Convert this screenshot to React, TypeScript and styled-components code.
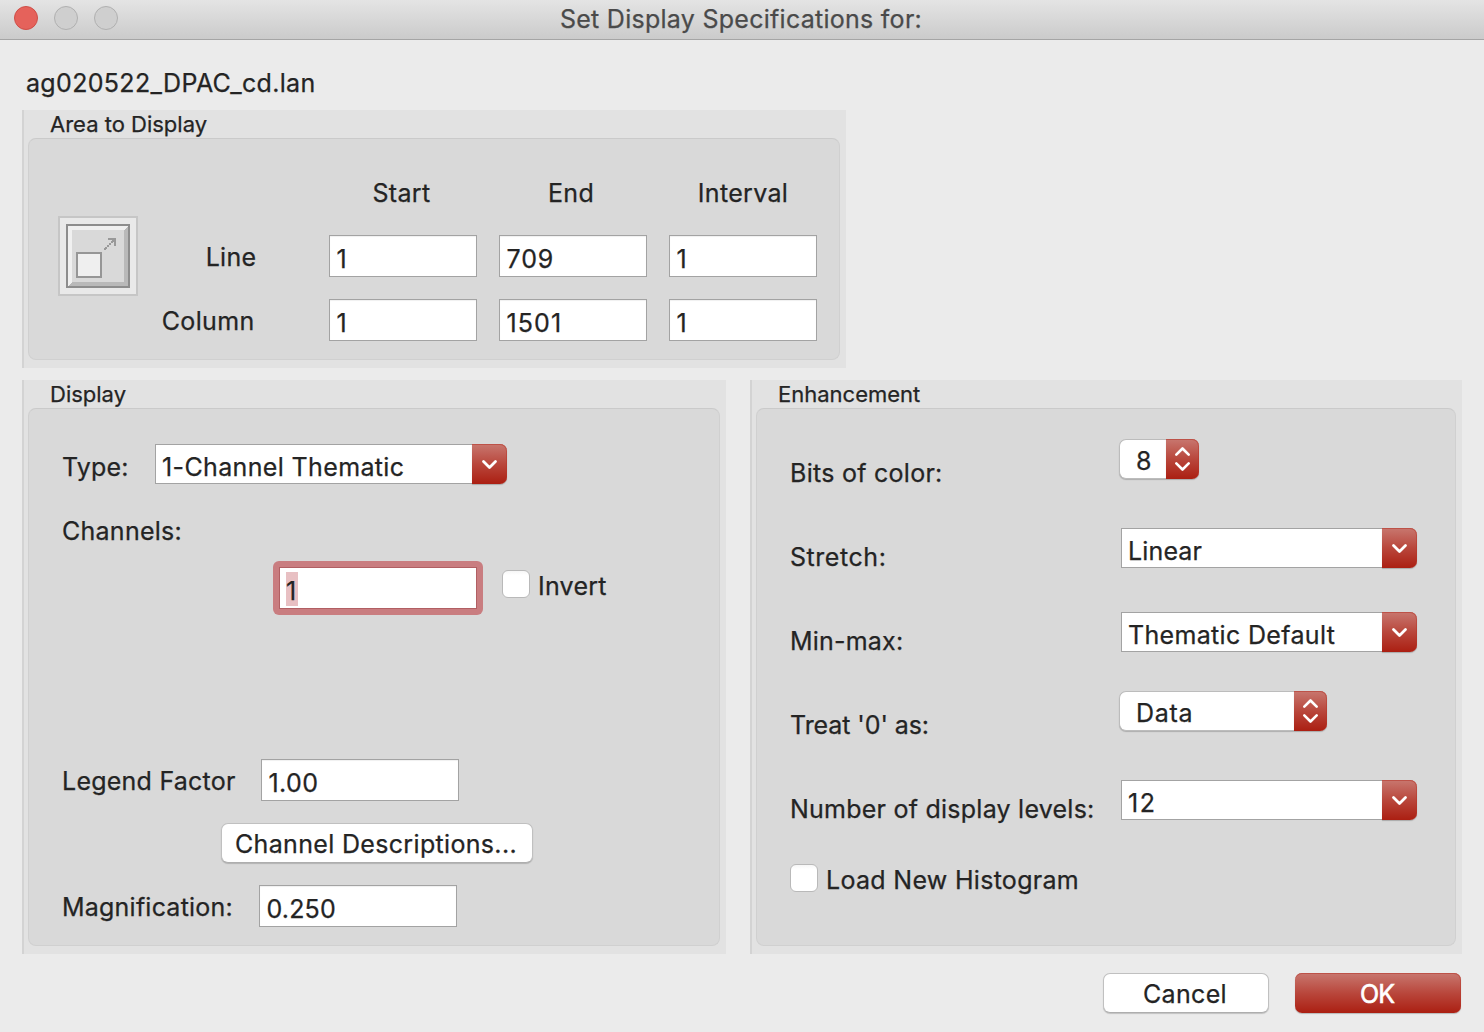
import React from 'react';
import styled, { createGlobalStyle, css } from 'styled-components';

const INK = '#242424';
const redFill = css`
  background: linear-gradient(#c8776f, #b9473c 50%, #ab1f12);
  box-shadow: inset 0 1px 0 #bd5248, inset -1px 0 0 rgba(185, 50, 38, 0.45), 0 1px 1px rgba(0, 0, 0, 0.22);
`;

const GlobalStyle = createGlobalStyle`
  * { box-sizing: border-box; }
  body {
    margin: 0;
    background: #ebebeb;
    color: ${INK};
    font-family: Inter, 'Liberation Sans', sans-serif;
    font-size: 25px;
    line-height: 30px;
    letter-spacing: 0.33px;
    white-space: nowrap;
    -webkit-text-stroke-width: 0.25px;
  }
`;

const Window = styled.div`
  width: 1484px;
  height: 1032px;
  overflow: hidden;
  display: flex;
  flex-direction: column;
  background: #ebebeb;
`;

const TitleBar = styled.header`
  height: 40px;
  flex: none;
  display: grid;
  grid-template-columns: 200px 1fr 200px;
  background: linear-gradient(#e4e4e4, #cbcbcb);
  border-bottom: 1px solid #a5a5a5;
`;

const Lights = styled.div`
  display: flex;
  gap: 16px;
  padding: 6px 0 0 14px;
`;

const Light = styled.span<{ $close?: boolean }>`
  width: 24px;
  height: 24px;
  border-radius: 50%;
  border: 1px solid ${p => (p.$close ? '#cf4e47' : '#b0b0b0')};
  background: ${p => (p.$close ? '#e5625b' : '#cfcfcf')};
`;

const Title = styled.h1`
  margin: 0;
  padding: 4px 2px 0 0;
  font: inherit;
  letter-spacing: 0.27px;
  text-align: center;
  color: #4a4a4a;
`;

const Content = styled.main`
  flex: 1;
  display: flex;
  flex-direction: column;
  padding: 28px 22px 0;
`;

const FileName = styled.div`
  height: 42px;
  padding-left: 4px;
  letter-spacing: 0.33px;
`;

const Group = styled.section<{ $w: number; $h: number }>`
  flex: none;
  width: ${p => p.$w}px;
  height: ${p => p.$h}px;
  display: flex;
  flex-direction: column;
  padding: 0 6px 8px 4px;
  border-left: 2px solid #d3d3d3;
  background: #e2e2e2;
`;

const GroupTitle = styled.h2`
  margin: 0;
  height: 28px;
  padding: 0 0 0 22px;
  font-size: 22px;
  font-weight: 400;
  line-height: 28px;
  letter-spacing: 0;
`;

const Well = styled.div<{ $pad: string }>`
  flex: 1;
  display: flex;
  flex-direction: column;
  padding: ${p => p.$pad};
  border: 1px solid #d0d0d0;
  border-top-color: #cacaca;
  border-radius: 8px;
  background: #d9d9d9;
`;

const AreaWell = styled(Well)`
  flex-direction: row;
`;

const AreaGrid = styled.div`
  display: grid;
  grid-template-columns: 157px repeat(3, 148px);
  grid-template-rows: repeat(3, 42px);
  gap: 22px;
  margin-left: 12px;
`;

const Head = styled.div<{ $shift?: number }>`
  padding: 7px ${p => p.$shift ?? 0}px 0 0;
  text-align: center;
`;

const RowLabel = styled.div<{ $end: number }>`
  padding: 7px ${p => p.$end}px 0 0;
  text-align: right;
`;

const Label = styled.span<{ $w?: number; $track?: number }>`
  flex: none;
  width: ${p => (p.$w ? `${p.$w}px` : 'auto')};
  letter-spacing: ${p => p.$track ?? 0.26}px;
`;

const Field = styled.div<{ $w?: number; $track?: number }>`
  flex: none;
  width: ${p => p.$w ?? 148}px;
  height: 42px;
  padding: 8px 0 0 6.5px;
  border: 1px solid #a3a3a3;
  background: #fff;
  letter-spacing: ${p => p.$track ?? 0.33}px;
  box-shadow: inset 0 1px 1px #f0f0f0;
`;

const FocusShell = styled.div`
  flex: none;
  padding: 6px;
  border-radius: 6px;
  background: #c97d80;
`;

const FocusField = styled(Field)`
  padding: 4px 0 0 6px;
  border-color: #b15f63;
  box-shadow: none;
`;

const Selected = styled.span`
  display: inline-block;
  width: 12px;
  height: 34px;
  padding-top: 4px;
  background: #e8c0c3;
`;

const Line = styled.div<{ $top: number; $h?: number; $left?: number }>`
  flex: none;
  display: flex;
  align-items: flex-start;
  height: ${p => p.$h ?? 42}px;
  margin: ${p => p.$top}px 0 0 ${p => p.$left ?? 0}px;
`;

const Drop = styled.div<{ $down?: number }>`
  flex: none;
  display: flex;
  padding-top: ${p => p.$down ?? 0}px;
`;

const ZoomFrame = styled.div`
  flex: none;
  width: 80px;
  height: 80px;
  margin-top: 45px;
  padding: 6px;
  border: 2px solid #c6c6c6;
  background: #e9e9e9;
`;

const IconSvg = styled.svg`
  display: block;
`;

const ComboText = styled.div<{ $w: number; $track?: number }>`
  width: ${p => p.$w}px;
  height: 40px;
  padding: 7px 0 0 6px;
  border: 1px solid #a3a3a3;
  border-right: 0;
  background: #fff;
  letter-spacing: ${p => p.$track ?? 0.36}px;
`;

const ComboButton = styled.div`
  ${redFill}
  width: 35px;
  height: 40px;
  border-radius: 0 7px 7px 0;
`;

const PopupText = styled.div<{ $w: number; $track?: number }>`
  width: ${p => p.$w}px;
  height: 40px;
  padding: 6px 0 0 16px;
  border: 1px solid #bcbcbc;
  border-right: 0;
  border-radius: 7px 0 0 7px;
  background: #fff;
  box-shadow: 0 1px 1px rgba(0, 0, 0, 0.2);
  letter-spacing: ${p => p.$track ?? 0.33}px;
`;

const PopupButton = styled(ComboButton)`
  width: 33px;
`;

const Check = styled.span`
  flex: none;
  width: 28px;
  height: 28px;
  margin-right: 8px;
  border: 1px solid #b9b9b9;
  border-radius: 6px;
  background: linear-gradient(#f6f6f6, #fff 4px);
`;

const Button = styled.button<{ $w: number; $primary?: boolean }>`
  flex: none;
  width: ${p => p.$w}px;
  height: 40px;
  padding: 2px 2px 0 0;
  border: 1px solid #c0c0c0;
  border-bottom-color: #aeaeae;
  border-radius: 7px;
  background: #fff;
  color: ${INK};
  font: inherit;
  letter-spacing: 0.33px;
  box-shadow: 0 1px 1px rgba(0, 0, 0, 0.18);
  ${p => p.$primary && css`
    ${redFill}
    border: 0;
    color: #fff;
    letter-spacing: -1px;
    -webkit-text-stroke-width: 0.6px;
  `}
`;

const Columns = styled.div`
  display: flex;
  gap: 24px;
  margin-top: 12px;
`;

const Footer = styled.footer`
  display: flex;
  justify-content: flex-end;
  gap: 26px;
  padding: 19px 1px 0 0;
`;

const EnhRow = styled.div`
  flex: none;
  display: grid;
  grid-template-columns: 330px auto;
  justify-content: start;
  height: 84px;
`;

const EnhLabel = styled.div<{ $track?: number }>`
  padding: 19px 0 0;
  letter-spacing: ${p => p.$track ?? 0.27}px;
`;

const Combo = ({ text, w, track }: { text: string; w: number; track?: number }) => (
  <>
    <ComboText $w={w} $track={track}>{text}</ComboText>
    <ComboButton>
      <svg width="35" height="40" fill="none" stroke="#fff" strokeWidth="2.8" strokeLinecap="round" strokeLinejoin="round">
        <path d="M11.5 17.5 17.5 23.5 23.5 17.5" />
      </svg>
    </ComboButton>
  </>
);

const Popup = ({ text, w, track }: { text: string; w: number; track?: number }) => (
  <>
    <PopupText $w={w} $track={track}>{text}</PopupText>
    <PopupButton>
      <svg width="33" height="40" fill="none" stroke="#fff" strokeWidth="2.6" strokeLinecap="round" strokeLinejoin="round">
        <path d="M10.3 15.7 16.5 9.5 22.7 15.7M10.3 24.3 16.5 30.5 22.7 24.3" />
      </svg>
    </PopupButton>
  </>
);

const ZoomIcon = () => (
  <IconSvg width="64" height="64" shapeRendering="crispEdges">
    <rect width="64" height="64" fill="#8d8d8d" />
    <rect x="2" y="2" width="60" height="60" fill="#f0f0f0" />
    <path d="M62 2V62H2L6 58H58V6Z" fill="#b9b9b9" />
    <rect x="6" y="6" width="52" height="52" fill="#d9d9d9" />
    <rect x="11" y="29" width="24" height="24" fill="#efefef" stroke="#969696" strokeWidth="2" />
    <path d="M42 14h8v8h-2v-4h-1v1h-2v2h-2v2h-2v2h-1v1h-2v-2h1v-1h2v-2h2v-2h2v-2h1v-1h-4z" fill="#999" />
  </IconSvg>
);

export default function App() {
  return (
    <>
      <GlobalStyle />
      <Window>
        <TitleBar>
          <Lights><Light $close /><Light /><Light /></Lights>
          <Title>Set Display Specifications for:</Title>
        </TitleBar>
        <Content>
          <FileName>ag020522_DPAC_cd.lan</FileName>
          <Group $w={824} $h={258}>
            <GroupTitle>Area to Display</GroupTitle>
            <AreaWell $pad="32px 0 0 29px">
              <ZoomFrame><ZoomIcon /></ZoomFrame>
              <AreaGrid>
                <span />
                <Head $shift={3}>Start</Head>
                <Head $shift={4}>End</Head>
                <Head>Interval</Head>
                <RowLabel $end={50.5}>Line</RowLabel>
                <Field>1</Field><Field $track={0.9}>709</Field><Field>1</Field>
                <RowLabel $end={52.5}>Column</RowLabel>
                <Field>1</Field><Field $track={1.1}>1501</Field><Field>1</Field>
              </AreaGrid>
            </AreaWell>
          </Group>
          <Columns>
            <Group $w={704} $h={574}>
              <GroupTitle>Display</GroupTitle>
              <Well $pad="0 0 0 33px">
                <Line $top={35} $h={40}>
                  <Drop $down={8}><Label $w={93} $track={0.2}>Type:</Label></Drop>
                  <Combo text="1-Channel Thematic" w={317} />
                </Line>
                <Line $top={32} $h={30}><Label>Channels:</Label></Line>
                <Line $top={15} $h={54} $left={211}>
                  <FocusShell>
                    <FocusField $w={198}><Selected>1</Selected></FocusField>
                  </FocusShell>
                  <Drop $down={9}><Label $w={19} /><Check /></Drop>
                  <Drop $down={10}><Label $track={0.25}>Invert</Label></Drop>
                </Line>
                <Line $top={144}>
                  <Drop $down={7}><Label $w={199} $track={0.24}>Legend Factor</Label></Drop>
                  <Field $w={198} $track={0.4}>1.00</Field>
                </Line>
                <Line $top={22} $h={40} $left={159}>
                  <Button $w={312}>Channel Descriptions...</Button>
                </Line>
                <Line $top={22}>
                  <Drop $down={7}><Label $w={197} $track={0.22}>Magnification:</Label></Drop>
                  <Field $w={198} $track={0.15}>0.250</Field>
                </Line>
              </Well>
            </Group>
            <Group $w={712} $h={574}>
              <GroupTitle>Enhancement</GroupTitle>
              <Well $pad="30px 0 0 33px">
                <EnhRow>
                  <EnhLabel>Bits of color:</EnhLabel>
                  <Line $top={0} $left={-1}><Popup text="8" w={47} /></Line>
                </EnhRow>
                <EnhRow>
                  <EnhLabel $track={0.55}>Stretch:</EnhLabel>
                  <Line $top={5} $left={1}><Combo text="Linear" w={261} track={0.14} /></Line>
                </EnhRow>
                <EnhRow>
                  <EnhLabel $track={0.2}>Min-max:</EnhLabel>
                  <Line $top={5} $left={1}><Combo text="Thematic Default" w={261} track={0.33} /></Line>
                </EnhRow>
                <EnhRow>
                  <EnhLabel $track={-0.08}>Treat '0' as:</EnhLabel>
                  <Line $top={0} $left={-1}><Popup text="Data" w={175} track={0.7} /></Line>
                </EnhRow>
                <EnhRow>
                  <EnhLabel $track={0.24}>Number of display levels:</EnhLabel>
                  <Line $top={5} $left={1}><Combo text="12" w={261} track={1.5} /></Line>
                </EnhRow>
                <Line $top={5} $h={40}>
                  <Check />
                  <Drop $down={1}><Label $track={0.3}>Load New Histogram</Label></Drop>
                </Line>
              </Well>
            </Group>
          </Columns>
          <Footer>
            <Button $w={166}>Cancel</Button>
            <Button $w={166} $primary>OK</Button>
          </Footer>
        </Content>
      </Window>
    </>
  );
}
